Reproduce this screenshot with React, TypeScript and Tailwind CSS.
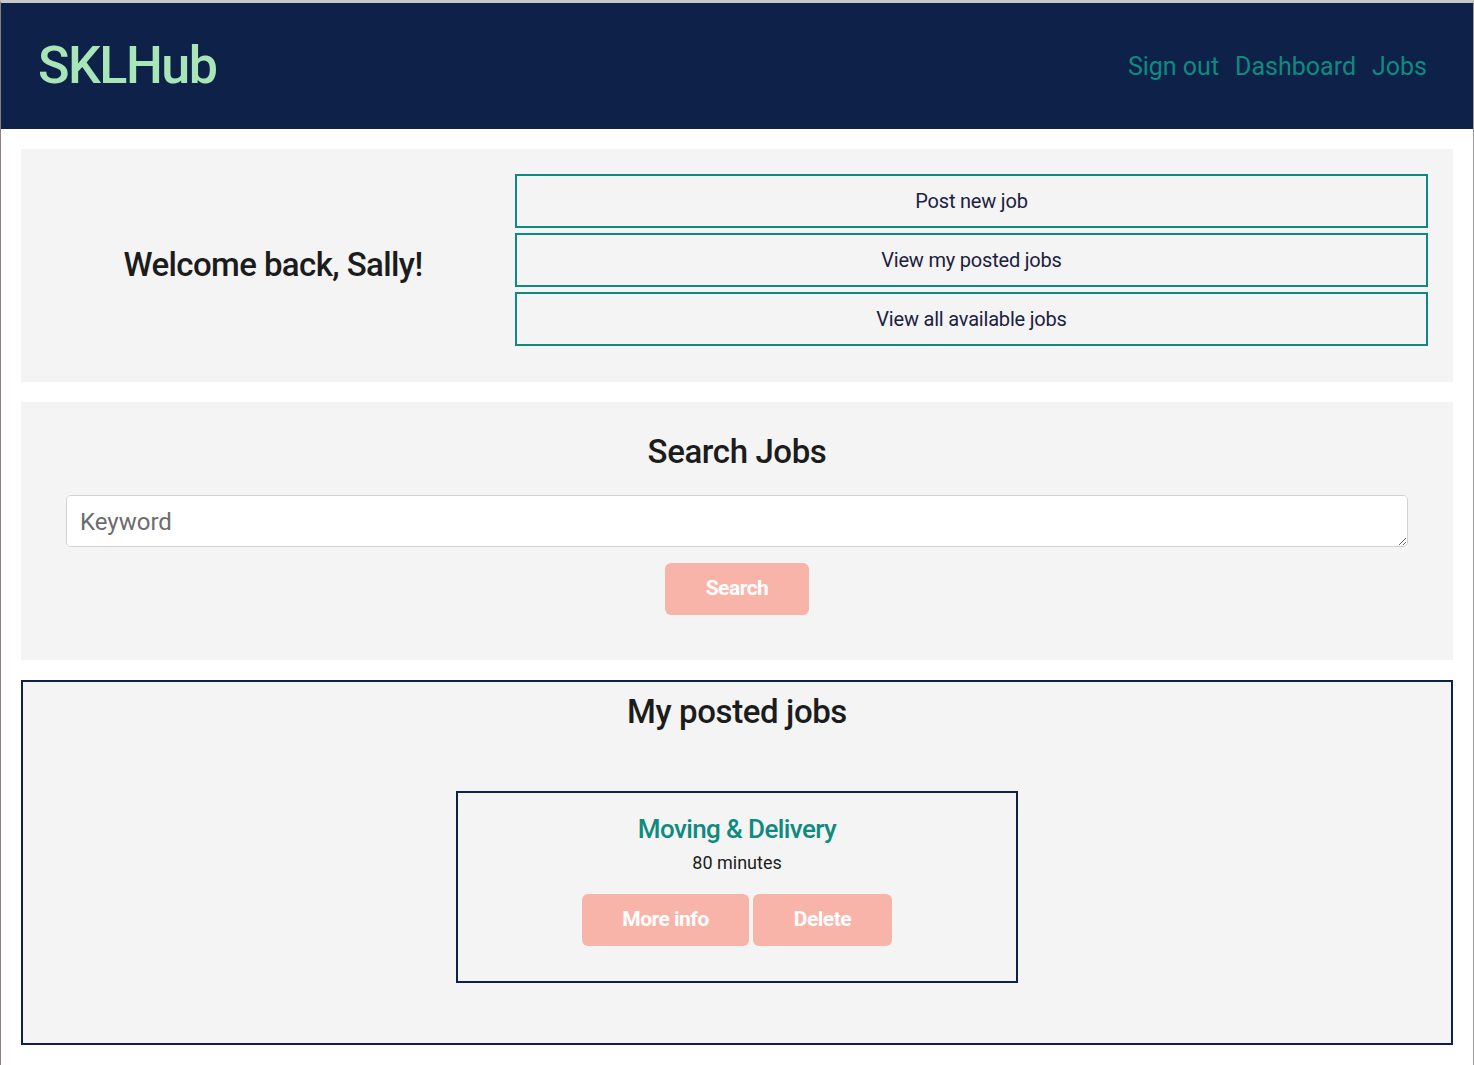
import React from 'react';

const teal = 'text-[#0f8a80]';

const ActionButton: React.FC<{ label: string }> = ({ label }) => (
  <button className="h-[54px] w-full border-2 border-[#0f8a80] bg-transparent text-[20px] tracking-[-0.2px] text-[#1b2140]">
    {label}
  </button>
);

const PinkButton: React.FC<{ label: string; className?: string }> = ({ label, className = '' }) => (
  <button
    className={`h-[52px] rounded-[6px] bg-[#f9b4aa] text-[21px] font-bold tracking-[-0.5px] text-white ${className}`}
  >
    {label}
  </button>
);

export default function App() {
  return (
    <div
      className="min-h-screen border-t-[3px] border-l border-r border-t-[#c8c8c8] border-l-[#8b7f7f] border-r-[#9a9a9a] bg-white"
      style={{ fontFamily: 'Roboto, "Liberation Sans", sans-serif' }}
    >
      {/* Header */}
      <header className="flex h-[126px] items-center justify-between bg-[#0e2149] pl-[37px] pr-[46px]">
        <h1 className="text-[52px] font-medium tracking-[-1.5px] text-[#a8e6b8]">SKLHub</h1>
        <nav className={`flex gap-[16px] pt-[2px] text-[25px] ${teal}`}>
          <a>Sign out</a>
          <a>Dashboard</a>
          <a>Jobs</a>
        </nav>
      </header>

      <main className="flex flex-col gap-[20px] px-[20px] pt-[20px] pb-[20px]">
        {/* Welcome */}
        <section className="flex bg-[#f4f4f4] pt-[25px] pr-[25px] pb-[36px]">
          <div className="flex w-[494px] items-center justify-center pt-[10px]">
            <h2 className="pl-[10px] text-[33px] font-medium tracking-[-0.6px] text-[#1c1c1c]">Welcome back, Sally!</h2>
          </div>
          <div className="flex flex-1 flex-col gap-[5px]">
            <ActionButton label="Post new job" />
            <ActionButton label="View my posted jobs" />
            <ActionButton label="View all available jobs" />
          </div>
        </section>

        {/* Search */}
        <section className="flex flex-col items-center bg-[#f4f4f4] px-[45px] pt-[25px] pb-[45px]">
          <h2 className="text-[33px] font-medium tracking-[-0.4px] text-[#1c1c1c]">Search Jobs</h2>
          <textarea
            placeholder="Keyword"
            rows={1}
            className="mt-[18px] h-[52px] w-full resize-y rounded-[5px] border border-[#cfd3d8] bg-white px-[13px] py-[8px] text-[24px] text-[#555] placeholder:text-[#6c6c6c] outline-none"
          />
          <PinkButton label="Search" className="mt-[16px] w-[144px]" />
        </section>

        {/* My posted jobs */}
        <section className="flex flex-col items-center border-2 border-[#0e2149] bg-[#f4f4f4] pt-[5px] pb-[60px]">
          <h2 className="text-[33px] font-medium tracking-[-0.4px] text-[#1c1c1c]">My posted jobs</h2>
          <div className="mt-[55px] flex w-[562px] flex-col items-center border-2 border-[#0e2149] pt-[17px] pb-[35px]">
            <h3 className={`text-[26px] font-medium tracking-[-0.6px] ${teal}`}>Moving &amp; Delivery</h3>
            <p className="text-[18px] text-[#1c1c1c]">80 minutes</p>
            <div className="mt-[18px] flex gap-[4px]">
              <PinkButton label="More info" className="w-[167px]" />
              <PinkButton label="Delete" className="w-[139px]" />
            </div>
          </div>
        </section>
      </main>
    </div>
  );
}
